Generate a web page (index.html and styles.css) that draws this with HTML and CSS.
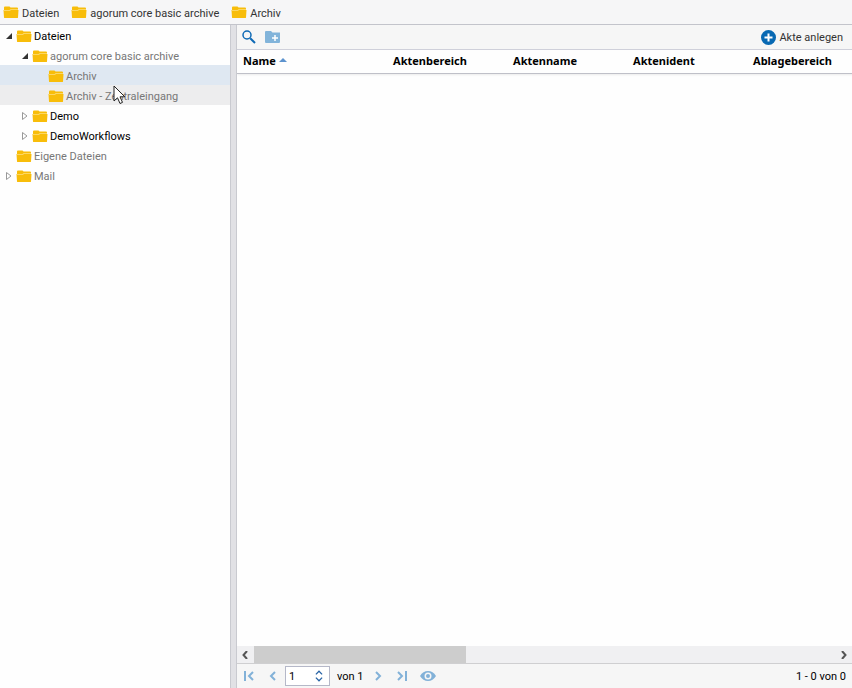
FILE: index.html
```
<!DOCTYPE html>
<html lang="de">
<head>
<meta charset="utf-8">
<title>Archiv</title>
<link rel="stylesheet" href="styles.css">
</head>
<body>
<svg class="defs" aria-hidden="true">
  <symbol id="folder" viewBox="0 0 16 13">
    <path fill="#f8bd0a" d="M1 1.500Q1 .5 2 .5H6.500L7.500 1.500H14Q15 1.500 15 2.500V4H15.500L15 11.500Q15 12 14 12H2Q1 12 1 11.500L.5 4H1Z"/>
    <path fill="#fcd762" d="M1 4H6.500L7.500 3H15V4H8L7 5H1Z"/>
  </symbol>
  <symbol id="open" viewBox="0 0 8 8"><path fill="#333" d="M7 1V7H1Z"/></symbol>
  <symbol id="closed" viewBox="0 0 8 8"><path fill="#fff" stroke="#999" d="M1.500 .5V7.500L6 4Z"/></symbol>
</svg>
<div class="app">
  <nav class="crumbs" aria-label="Pfad">
    <a href="#"><svg class="folder"><use href="#folder"/></svg><span>Dateien</span></a>
    <a href="#"><svg class="folder"><use href="#folder"/></svg><span>agorum core basic archive</span></a>
    <a href="#"><svg class="folder"><use href="#folder"/></svg><span>Archiv</span></a>
  </nav>
  <div class="workspace">
    <aside class="sidebar">
      <ul class="tree">
        <li><button class="row strong"><svg class="arrow"><use href="#open"/></svg><svg class="folder"><use href="#folder"/></svg><span>Dateien</span></button>
          <ul>
            <li><button class="row"><svg class="arrow"><use href="#open"/></svg><svg class="folder"><use href="#folder"/></svg><span>agorum core basic archive</span></button>
              <ul>
                <li><button class="row selected"><i class="arrow"></i><svg class="folder"><use href="#folder"/></svg><span>Archiv</span></button></li>
                <li><button class="row hovered"><i class="arrow"></i><svg class="folder"><use href="#folder"/></svg><span>Archiv - Zentraleingang</span></button></li>
              </ul>
            </li>
            <li><button class="row strong"><svg class="arrow"><use href="#closed"/></svg><svg class="folder"><use href="#folder"/></svg><span>Demo</span></button></li>
            <li><button class="row strong"><svg class="arrow"><use href="#closed"/></svg><svg class="folder"><use href="#folder"/></svg><span>DemoWorkflows</span></button></li>
          </ul>
        </li>
        <li><button class="row"><i class="arrow"></i><svg class="folder"><use href="#folder"/></svg><span>Eigene Dateien</span></button></li>
        <li><button class="row"><svg class="arrow"><use href="#closed"/></svg><svg class="folder"><use href="#folder"/></svg><span>Mail</span></button></li>
      </ul>
    </aside>
    <div class="splitter"></div>
    <main class="content">
      <div class="toolbar">
        <button aria-label="Suchen"><svg width="14" height="14" viewBox="0 0 14 14" fill="none" stroke="#0e69b5"><circle cx="5" cy="5" r="4" stroke-width="1.500"/><path stroke-width="2" d="M8.200 8.200L13 13"/></svg></button>
        <button aria-label="Neuer Ordner"><svg width="16" height="12" viewBox="0 0 16 12"><path fill="#82b4da" d="M0 1Q0 0 1 0H6L7.500 1.500H15V11Q15 12 14 12H1Q0 12 0 11Z"/><path stroke="#fff" stroke-width="1.500" d="M10 4V10M7 7H13"/></svg></button>
        <button class="create"><svg width="15" height="15" viewBox="0 0 15 15"><circle cx="7.500" cy="7.500" r="7.500" fill="#0869b3"/><path stroke="#fff" stroke-width="2" d="M7.500 3.500V11.500M3.500 7.500H11.500"/></svg><span>Akte anlegen</span></button>
      </div>
      <div class="grid">
        <table>
          <thead><tr>
            <th class="name" aria-sort="ascending">Name<svg class="sort" width="8" height="4" viewBox="0 0 8 4"><path fill="#5d93ce" d="M4 0L8 4H0Z"/></svg></th>
            <th>Aktenbereich</th><th>Aktenname</th><th>Aktenident</th><th>Ablagebereich</th>
          </tr></thead>
          <tbody></tbody>
        </table>
      </div>
      <div class="scrollbar">
        <button aria-label="Nach links"><svg width="7" height="8" viewBox="0 0 7 8"><path d="M5 0L1.500 4L5 8"/></svg></button>
        <div class="track"><div class="thumb"></div></div>
        <button aria-label="Nach rechts"><svg width="7" height="8" viewBox="0 0 7 8"><path d="M2 0L5.500 4L2 8"/></svg></button>
      </div>
      <footer class="pager">
        <button aria-label="Erste Seite"><svg viewBox="0 0 12 10"><path d="M2 0V10M10 1L6 5L10 9"/></svg></button>
        <button aria-label="Vorherige Seite"><svg viewBox="0 0 12 10"><path d="M8 1L4 5L8 9"/></svg></button>
        <div class="page">
          <input type="text" value="1" aria-label="Seite">
          <div class="steps">
            <button aria-label="Mehr"><svg viewBox="0 0 6 4"><path d="M.5 3.500L3 1L5.500 3.500"/></svg></button>
            <button aria-label="Weniger"><svg viewBox="0 0 6 4"><path d="M.5 .5L3 3L5.500 .5"/></svg></button>
          </div>
        </div>
        <span class="total">von 1</span>
        <button aria-label="Nächste Seite"><svg viewBox="0 0 12 10"><path d="M4 1L8 5L4 9"/></svg></button>
        <button aria-label="Letzte Seite"><svg viewBox="0 0 12 10"><path d="M2 1L6 5L2 9M10 0V10"/></svg></button>
        <button aria-label="Vorschau"><svg class="eye" viewBox="0 0 16 10"><path d="M0 5Q3 0 8 0T16 5Q13 10 8 10T0 5Z"/><circle cx="8" cy="5" r="2.750"/></svg></button>
        <span class="range">1 - 0 von 0</span>
      </footer>
    </main>
  </div>
</div>
<svg class="cursor" width="13" height="20" viewBox="0 0 13 20" aria-hidden="true"><path fill="#fff" stroke="#222" d="M1 1V16L4.500 12.800L7 18.500L9.500 17.400L7 11.800H11.800Z"/></svg>
</body>
</html>
```
FILE: styles.css
```
* { box-sizing: border-box; }
body {
  margin: 0;
  font: 11px/18px Roboto, sans-serif;
  color: #000;
  background: #fefefe;
}
button {
  display: flex;
  align-items: center;
  padding: 0;
  border: 0;
  background: none;
  font: inherit;
  color: inherit;
}
svg { flex: none; }
span { padding-top: 2px; }
ul { margin: 0; padding: 0; list-style: none; }
.defs { position: absolute; width: 0; height: 0; }
.app { display: flex; flex-direction: column; height: 100vh; }

.crumbs {
  display: flex;
  flex: none;
  gap: 12px;
  height: 25px;
  padding: 1px 3px 0;
  background: #f6f6f7;
  border-bottom: 1px solid #c3c4cb;
}
.crumbs a {
  display: flex;
  align-items: center;
  gap: 3px;
  color: #333;
  text-decoration: none;
}
.folder { width: 16px; height: 13px; }
.workspace { display: flex; flex: 1; min-height: 0; }

.sidebar { width: 27%; }
.row {
  gap: 2px;
  width: 100%;
  height: 20px;
  padding: 2px 0 0 5px;
  color: #777;
  white-space: nowrap;
}
.row .arrow { width: 8px; height: 8px; margin-right: 1px; }
.tree ul .row { padding-left: 21px; }
.tree ul ul .row { padding-left: 37px; }
.row.strong { color: #000; }
.row.selected { background: #dfe8f2; }
.row.hovered { background: #ededee; }

.splitter {
  width: 7px;
  background: #e1e1e5;
  border: solid #c9cad0;
  border-width: 0 1px;
}
.content { display: flex; flex: 1; flex-direction: column; min-width: 0; }
.toolbar {
  display: flex;
  flex: none;
  gap: 9px;
  height: 25px;
  padding: 0 9px 0 5px;
  background: #f6f6f6;
  border-bottom: 1px solid #cfd0da;
}
.toolbar .create { gap: 3px; margin-left: auto; color: #333; }

.grid { flex: 1; overflow: hidden; }
table {
  width: 100%;
  min-width: 630px;
  table-layout: fixed;
  border-collapse: collapse;
}
thead { box-shadow: 0 1px 3px #ddd; }
th {
  height: 23px;
  padding: 0 6px;
  border-bottom: 1px solid #bfc0c8;
  font-family: "Noto Sans", sans-serif;
  text-align: left;
  white-space: nowrap;
}
th.name { width: 150px; }
.sort { margin-left: 3px; vertical-align: 3px; }

.scrollbar { display: flex; flex: none; height: 17px; background: #f0f0f2; }
.scrollbar button { justify-content: center; width: 17px; }
.scrollbar path { fill: none; stroke: #555; stroke-width: 2; }
.track { display: flex; flex: 1; }
.thumb { width: 36.5%; background: #cdcdcd; }

.pager {
  display: flex;
  flex: none;
  align-items: center;
  gap: 12px;
  height: 25px;
  padding: 0 6px;
  background: #f6f6f6;
  border-top: 1px solid #cfcfd1;
}
.pager svg { width: 12px; height: 10px; }
.pager > button path { fill: none; stroke: #82b1d8; stroke-width: 2; }
.pager svg.eye { width: 16px; }
.pager .eye path { fill: #82b1d8; stroke: none; }
.eye circle { fill: #82b1d8; stroke: #f6f6f6; stroke-width: 1.5px; }
.page {
  display: flex;
  width: 45px;
  height: 20px;
  margin-left: -6px;
  background: #fff;
  border: 1px solid #b5b8c8;
}
.page input {
  flex: 1;
  min-width: 0;
  padding: 2px 3px 0;
  border: 0;
  outline: 0;
  background: none;
  font: inherit;
}
.steps { display: flex; flex-direction: column; justify-content: space-evenly; width: 14px; }
.page .steps svg { width: 8px; height: 5px; }
.steps path { fill: none; stroke: #2763a5; }
.total { margin: 0 -4px 0 -5px; }
.range { margin-left: auto; }

.cursor { position: absolute; left: 113px; top: 85px; }
```
